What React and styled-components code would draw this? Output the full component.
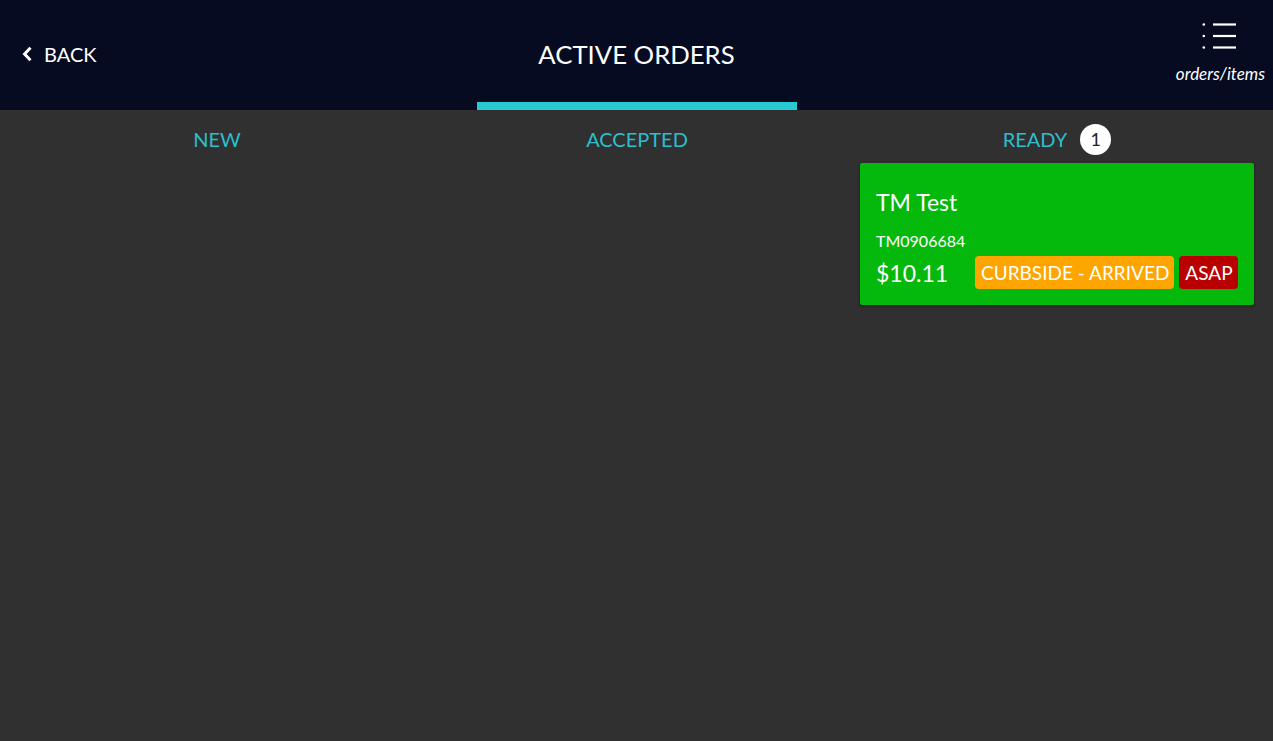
import styled, { createGlobalStyle } from "styled-components";

const GlobalStyle = createGlobalStyle`
    html, body {
        margin: 0;
        padding: 0;
        background: #303030;
        font-family: Lato, "Liberation Sans", sans-serif;
    }
`;

const Page = styled.div`
    min-height: 741px;
    background: #303030;
`;

const Header = styled.header`
    position: relative;
    height: 110px;
    background: #060b21;
    display: grid;
    grid-template-columns: 1fr auto 1fr;
    align-items: center;
    color: #fff;
`;

const Back = styled.div`
    display: flex;
    align-items: center;
    gap: 11px;
    padding-left: 22px;
    padding-bottom: 2px;
    font-size: 20px;
    cursor: pointer;
    svg { display: block; }
`;

const Title = styled.h1`
    margin: 0;
    font-size: 25.7px;
    font-weight: 400;
    text-align: center;
    padding-bottom: 3px;
`;

const ActiveBar = styled.div`
    position: absolute;
    left: 477px;
    bottom: 0;
    width: 320px;
    height: 8px;
    background: #29c9d3;
`;

const MenuButton = styled.div`
    justify-self: end;
    display: flex;
    flex-direction: column;
    align-items: center;
    gap: 15px;
    padding-right: 8px;
    padding-bottom: 4px;
    font-size: 17px;
    line-height: 20px;
    font-style: italic;
    svg { display: block; }
`;

const Board = styled.main`
    display: grid;
    grid-template-columns: repeat(3, 420px);
    padding: 0 6px 0 7px;
`;

const Column = styled.section`
    display: flex;
    flex-direction: column;
    align-items: stretch;
    padding: 0 13px;
`;

const ColumnHead = styled.div`
    height: 53px;
    box-sizing: border-box;
    padding-top: 5px;
    display: flex;
    align-items: center;
    justify-content: center;
    gap: 13px;
    color: #2bbfcc;
    font-size: 20px;
`;

const Count = styled.span`
    width: 31px;
    height: 31px;
    border-radius: 50%;
    background: #fff;
    color: #222;
    font-size: 18px;
    display: flex;
    align-items: center;
    justify-content: center;
`;

const Card = styled.div`
    background: ${p => p.$bg};
    border-radius: 2px;
    box-shadow: 0 1px 3px rgba(0, 0, 0, 0.45);
    padding: 25px 16px 16px;
    color: #fff;
`;

const Customer = styled.div`
    font-size: 23px;
    line-height: 28px;
`;

const OrderNo = styled.div`
    margin-top: 15px;
    font-size: 16px;
    line-height: 19px;
`;

const Bottom = styled.div`
    display: flex;
    align-items: center;
    margin-top: 6px;
`;

const Price = styled.div`
    font-size: 23px;
    flex: 0 0 99px;
`;

const Tag = styled.span`
    background: ${p => p.$bg};
    border-radius: 4px;
    padding: 0 5px 0 6px;
    height: 33px;
    display: flex;
    align-items: center;
    white-space: nowrap;
    font-size: 19px;
    margin-right: 5px;
`;

const ChevronLeft = () => (
    <svg width="11" height="16" viewBox="0 0 11 16">
        <path d="M8.5 1.8 L2.6 8 L8.5 14.2" fill="none" stroke="#fff" strokeWidth="3" />
    </svg>
);

const ListIcon = () => (
    <svg width="36" height="26" viewBox="0 0 36 26">
        <circle cx="1.8" cy="1.5" r="1.3" fill="#fff" />
        <circle cx="1.8" cy="13" r="1.3" fill="#fff" />
        <circle cx="1.8" cy="24.5" r="1.3" fill="#fff" />
        <rect x="11" y="0.4" width="23" height="2.2" fill="#fff" />
        <rect x="11" y="11.9" width="23" height="2.2" fill="#fff" />
        <rect x="11" y="23.4" width="23" height="2.2" fill="#fff" />
    </svg>
);

const orders = {
    new: [],
    accepted: [],
    ready: [
        { name: "TM Test", number: "TM0906684", total: "$10.11", type: "CURBSIDE - ARRIVED", time: "ASAP" },
    ],
};

export default function App() {
    const columns = [
        { key: "new", label: "NEW" },
        { key: "accepted", label: "ACCEPTED" },
        { key: "ready", label: "READY" },
    ];
    return (
        <Page>
            <GlobalStyle />
            <Header>
                <Back><ChevronLeft /> BACK</Back>
                <Title>ACTIVE ORDERS</Title>
                <MenuButton>
                    <ListIcon />
                    orders/items
                </MenuButton>
                <ActiveBar />
            </Header>
            <Board>
                {columns.map(col => (
                    <Column key={col.key}>
                        <ColumnHead>
                            {col.label}
                            {orders[col.key].length > 0 && <Count>{orders[col.key].length}</Count>}
                        </ColumnHead>
                        {orders[col.key].map(o => (
                            <Card key={o.number} $bg="#04b90b">
                                <Customer>{o.name}</Customer>
                                <OrderNo>{o.number}</OrderNo>
                                <Bottom>
                                    <Price>{o.total}</Price>
                                    <Tag $bg="#ffa500">{o.type}</Tag>
                                    <Tag $bg="#b80000">{o.time}</Tag>
                                </Bottom>
                            </Card>
                        ))}
                    </Column>
                ))}
            </Board>
        </Page>
    );
}
